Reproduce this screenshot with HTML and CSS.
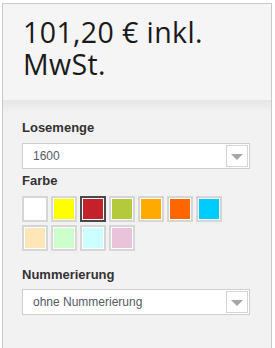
FILE: index.html
```html
<!DOCTYPE html>
<html lang="de">
<head>
<meta charset="utf-8">
<link rel="stylesheet" href="styles.css">
</head>
<body>
<div class="panel">
  <div class="price-head">
    <div class="price">101,20 € inkl. MwSt.</div>
  </div>
  <div class="options">
    <div class="label">Losemenge</div>
    <div class="select">
      <span class="select-text">1600</span>
      <span class="select-btn"><span class="tri"></span></span>
    </div>
    <div class="label label-farbe">Farbe</div>
    <div class="swatches">
      <span class="sw"><span class="c c-white"></span></span>
      <span class="sw"><span class="c c-yellow"></span></span>
      <span class="sw sel"><span class="c c-red"></span></span>
      <span class="sw"><span class="c c-olive"></span></span>
      <span class="sw"><span class="c c-orange"></span></span>
      <span class="sw"><span class="c c-dorange"></span></span>
      <span class="sw"><span class="c c-cyan"></span></span>
      <span class="sw"><span class="c c-peach"></span></span>
      <span class="sw"><span class="c c-mint"></span></span>
      <span class="sw"><span class="c c-ice"></span></span>
      <span class="sw"><span class="c c-pink"></span></span>
    </div>
    <div class="label label-num">Nummerierung</div>
    <div class="select">
      <span class="select-text">ohne Nummerierung</span>
      <span class="select-btn"><span class="tri"></span></span>
    </div>
  </div>
</div>
</body>
</html>
```

FILE: styles.css
```css
html, body {
  margin: 0;
  padding: 0;
  background: #ffffff;
}
body {
  padding: 3px 0 0 2px;
  width: 275px;
  height: 348px;
  box-sizing: border-box;
  overflow: hidden;
}
.panel {
  width: 270px;
  height: 360px;
  box-sizing: border-box;
  border: 1px solid #c9c9c9;
  background: #f2f2f2;
}
.price-head {
  background: #f5f5f5;
  padding: 12px 10px 20px 20px;
  position: relative;
}
.price-head::after {
  content: "";
  position: absolute;
  left: 0;
  right: 0;
  top: 100%;
  height: 12px;
  background: linear-gradient(#e6e6e6, rgba(242,242,242,0));
}
.price {
  font-family: "Open Sans", sans-serif;
  font-size: 28.5px;
  font-weight: 400;
  letter-spacing: 0.4px;
  line-height: 32px;
  color: #1a1a1a;
  width: 235px;
}
.options {
  padding: 20px 19px 0 19px;
}
.label {
  font-family: "Liberation Sans", Arial, sans-serif;
  font-weight: bold;
  font-size: 13px;
  line-height: 15px;
  color: #333333;
  margin-bottom: 8px;
}
.label-farbe {
  margin-top: 4px;
}
.label-num {
  margin-top: 16px;
  margin-bottom: 7px;
}
.select {
  width: 228px;
  height: 26px;
  box-sizing: border-box;
  border: 1px solid #cfcfcf;
  background: #ffffff;
  display: flex;
  align-items: center;
  justify-content: space-between;
  padding: 0 1px 0 10px;
}
.select-text {
  font-family: "Liberation Sans", Arial, sans-serif;
  font-size: 12px;
  color: #555a62;
}
.select-btn {
  width: 22px;
  height: 22px;
  box-sizing: border-box;
  border: 1px solid #d4d4d4;
  display: flex;
  align-items: center;
  justify-content: center;
}
.tri {
  width: 0;
  height: 0;
  border-left: 6px solid transparent;
  border-right: 6px solid transparent;
  border-top: 6px solid #a6a6a6;
  margin-top: 1px;
}
.swatches {
  display: grid;
  grid-template-columns: repeat(7, 26px);
  gap: 3px;
}
.sw {
  width: 26px;
  height: 26px;
  box-sizing: border-box;
  border: 2px solid #d6d6d6;
  background: #ffffff;
  padding: 1px;
  display: block;
}
.sw.sel {
  border-color: #4a4a4a;
}
.c {
  display: block;
  width: 100%;
  height: 100%;
}
.c-white { background: #ffffff; }
.c-yellow { background: #ffff00; }
.c-red { background: #c4222a; }
.c-olive { background: #b4c93c; }
.c-orange { background: #ffaa00; }
.c-dorange { background: #ff6600; }
.c-cyan { background: #00ccff; }
.c-peach { background: #ffe6b9; }
.c-mint { background: #ccffcc; }
.c-ice { background: #ccffff; }
.c-pink { background: #e9c3d9; }
```
